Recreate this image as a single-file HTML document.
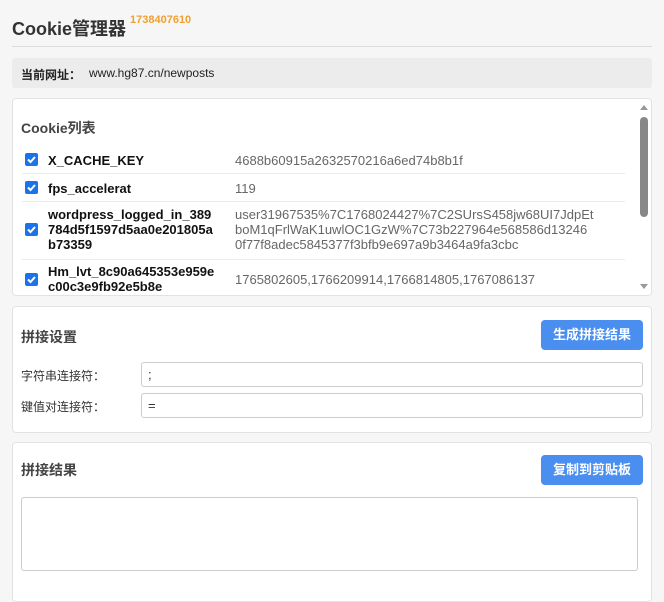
<!DOCTYPE html><html><head><meta charset="utf-8"><style>
*{box-sizing:border-box;margin:0;padding:0}
body{width:664px;height:589px;overflow:hidden;background:#f6f6f6;font-family:"Liberation Sans","Noto Sans CJK SC",sans-serif;position:relative;color:#333}
.a{position:absolute}
.card{position:absolute;left:12px;width:640px;background:#fff;border:1px solid #e2e2e2;border-radius:4px}
.cb{position:absolute;left:25px;width:13px;height:13px;background:#1a73e8;border-radius:2px}
.cb svg{position:absolute;left:1px;top:1px}
.nm{position:absolute;left:48px;font-weight:bold;font-size:13px;color:#111;line-height:15px;width:182px}
.vl{position:absolute;left:235px;font-size:13px;color:#666;line-height:15px;width:392px}
.sep{position:absolute;left:22px;width:603px;height:1px;background:#ebebeb}
.btn{position:absolute;left:541px;width:102px;height:30px;background:#4a8ef0;color:#fff;font-size:13px;font-weight:bold;border-radius:4px;text-align:center;line-height:30px}
.inp{position:absolute;left:141px;width:502px;height:25px;border:1px solid #ccc;border-radius:3px;font-size:13px;padding-left:6px;line-height:23px}
.lb{position:absolute;left:21px;font-size:12px;color:#333}
.h{position:absolute;left:21px;font-size:14px;font-weight:bold;color:#444}
</style></head><body>
<div class="a" style="left:12px;top:15px;font-size:18px;font-weight:bold;color:#333">Cookie管理器</div>
<div class="a" style="left:130px;top:14px;font-size:11px;font-weight:bold;color:#f0a030">1738407610</div>
<div class="a" style="left:12px;top:46px;width:640px;height:1px;background:#ddd"></div>
<div class="a" style="left:12px;top:58px;width:640px;height:30px;background:#ececec;border-radius:3px"></div>
<div class="a" style="left:21px;top:66px;font-size:12px;font-weight:bold;color:#222">当前网址：</div>
<div class="a" style="left:89px;top:66px;font-size:12px;color:#222">www.hg87.cn/newposts</div>

<div class="card" style="top:98px;height:198px;overflow:hidden">
<div class="a" style="left:624px;top:0;width:15px;height:198px;background:#fff"></div>
<div class="a" style="left:627px;top:18px;width:8px;height:100px;background:#888;border-radius:4px"></div>
<div class="a" style="left:627px;top:6px;width:0;height:0;border-left:4px solid transparent;border-right:4px solid transparent;border-bottom:5px solid #999"></div>
<div class="a" style="left:627px;top:185px;width:0;height:0;border-left:4px solid transparent;border-right:4px solid transparent;border-top:5px solid #999"></div>
</div>
<div class="h" style="top:118px">Cookie列表</div>
<div class="cb" style="top:153px"><svg width="11" height="11"><path d="M2 5.5l2.5 2.5L9 3" stroke="#fff" stroke-width="2" fill="none"/></svg></div>
<div class="nm" style="top:153px">X_CACHE_KEY</div>
<div class="vl" style="top:153px">4688b60915a2632570216a6ed74b8b1f</div>
<div class="sep" style="top:173px"></div>
<div class="cb" style="top:181px"><svg width="11" height="11"><path d="M2 5.5l2.5 2.5L9 3" stroke="#fff" stroke-width="2" fill="none"/></svg></div>
<div class="nm" style="top:181px">fps_accelerat</div>
<div class="vl" style="top:181px">119</div>
<div class="sep" style="top:201px"></div>
<div class="cb" style="top:223px"><svg width="11" height="11"><path d="M2 5.5l2.5 2.5L9 3" stroke="#fff" stroke-width="2" fill="none"/></svg></div>
<div class="nm" style="top:207px">wordpress_logged_in_389<br>784d5f1597d5aa0e201805a<br>b73359</div>
<div class="vl" style="top:207px">user31967535%7C1768024427%7C2SUrsS458jw68UI7JdpEt<br>boM1qFrlWaK1uwlOC1GzW%7C73b227964e568586d13246<br>0f77f8adec5845377f3bfb9e697a9b3464a9fa3cbc</div>
<div class="sep" style="top:259px"></div>
<div class="cb" style="top:273px"><svg width="11" height="11"><path d="M2 5.5l2.5 2.5L9 3" stroke="#fff" stroke-width="2" fill="none"/></svg></div>
<div class="nm" style="top:264px">Hm_lvt_8c90a645353e959e<br>c00c3e9fb92e5b8e</div>
<div class="vl" style="top:272px">1765802605,1766209914,1766814805,1767086137</div>

<div class="card" style="top:306px;height:127px"></div>
<div class="h" style="top:327px">拼接设置</div>
<div class="btn" style="top:320px">生成拼接结果</div>
<div class="lb" style="top:367px">字符串连接符：</div>
<div class="inp" style="top:362px">;</div>
<div class="lb" style="top:398px">键值对连接符：</div>
<div class="inp" style="top:393px">=</div>

<div class="card" style="top:442px;height:160px"></div>
<div class="h" style="top:460px">拼接结果</div>
<div class="btn" style="top:455px">复制到剪贴板</div>
<div class="a" style="left:21px;top:497px;width:617px;height:74px;border:1px solid #ccc;border-radius:3px;background:#fff"></div>
</body></html>
